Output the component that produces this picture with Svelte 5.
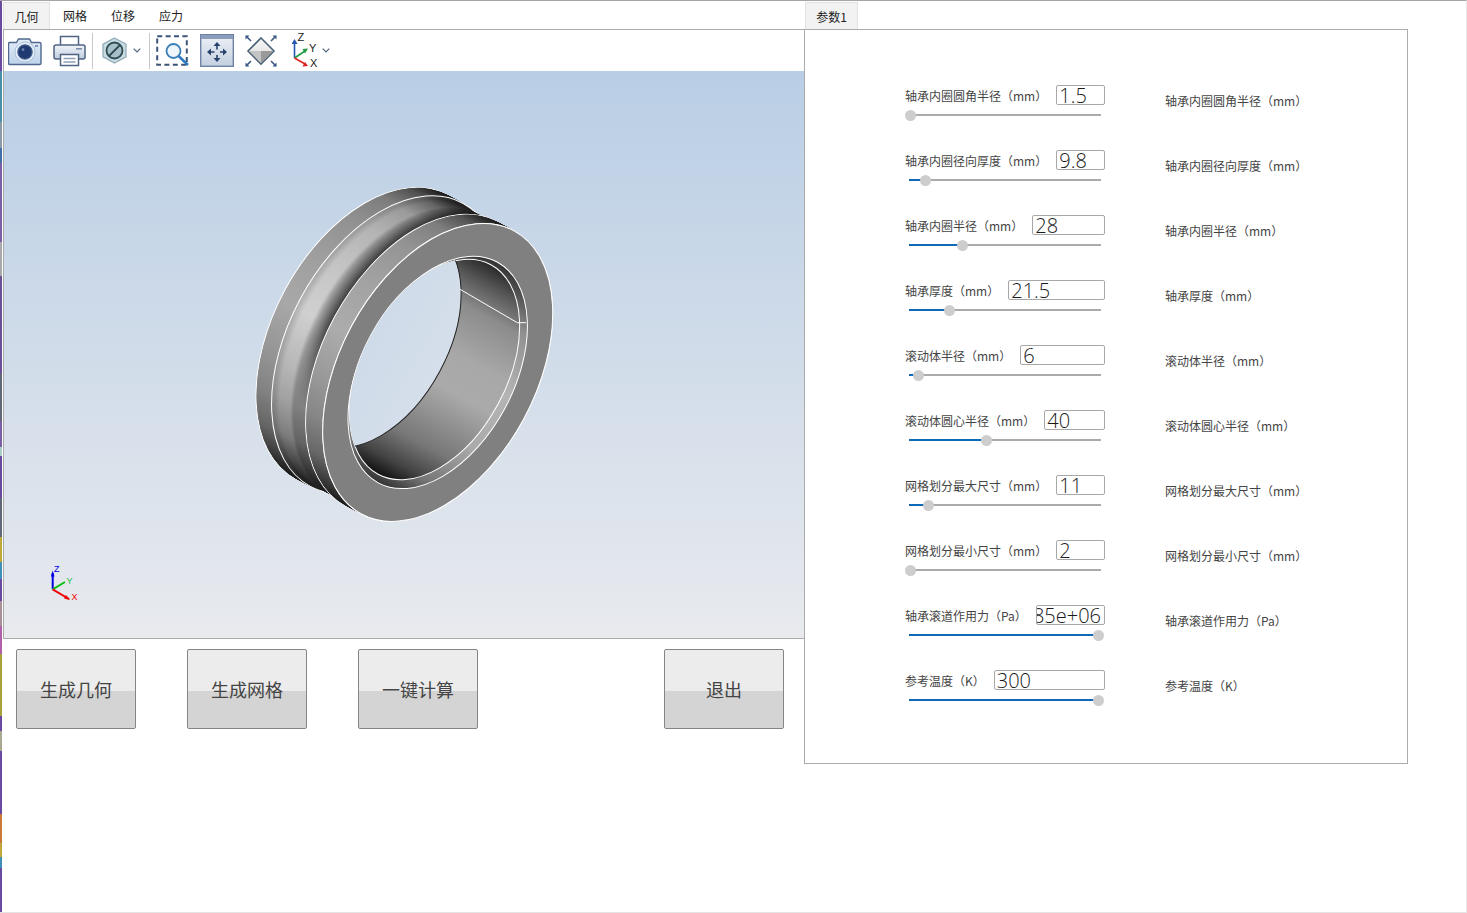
<script>
  const tabs = ["几何", "网格", "位移", "应力"];

  const params = [
    { label: "轴承内圈圆角半径（mm）", value: "1.5", knob: 1 },
    { label: "轴承内圈径向厚度（mm）", value: "9.8", knob: 16 },
    { label: "轴承内圈半径（mm）", value: "28", knob: 53 },
    { label: "轴承厚度（mm）", value: "21.5", knob: 40 },
    { label: "滚动体半径（mm）", value: "6", knob: 9 },
    { label: "滚动体圆心半径（mm）", value: "40", knob: 77 },
    { label: "网格划分最大尺寸（mm）", value: "11", knob: 19 },
    { label: "网格划分最小尺寸（mm）", value: "2", knob: 1 },
    { label: "轴承滚道作用力（Pa）", value: "1.85e+06", knob: 189, clip: true },
    { label: "参考温度（K）", value: "300", knob: 189 },
  ];

  const actions = ["生成几何", "生成网格", "一键计算"];

  // ring geometry, page coordinates
  const cx = 437.7;
  const cy = 372.4;
  const rx = 160.8;
  const ry = 97.8;
  const rot = -61.7;
  const dx = -66.7;
  const dy = -36;

  const edge = [
    [0, 0.15],
    [0.04, 0.35],
    [0.1, 0.6],
    [0.2, 0.78],
    [0.3, 0.88],
    [0.47, 1],
    [0.65, 0.94],
    [0.8, 0.86],
    [0.9, 0.74],
    [0.96, 0.48],
    [1, 0.15],
  ];

  // brightness of the surface at depth t (0 front, 1 back)
  function shade(t) {
    if (t > 0.77) return 168;
    if (t > 0.68) return 178 + ((0.77 - t) / 0.09) * 30;
    if (t > 0.52) return 208;
    if (t > 0.46) return 208 - ((0.52 - t) / 0.06) * 46;
    if (t > 0.26) return 162 - ((0.46 - t) / 0.2) * 110;
    return 172;
  }

  // the groove next to the rim only goes dark on its upper right side
  function grey(t, x, f) {
    let b = shade(t);
    if (t > 0.26 && t < 0.46) {
      const k = Math.min(1, Math.max(0, (0.45 - x) / 0.25));
      b = b + (165 - b) * k;
    }
    return Math.round(b * f);
  }

  function scale(t) {
    if (t > 0.27 && t < 0.76) return 0.985;
    return 1;
  }

  const lines = [0, 0.26, 0.765, 1];
  const slices = [];
  const steps = 90;
  for (let i = 0; i <= steps; i++) {
    const t = 1 - i / steps;
    slices.push({
      id: "s" + i,
      x: cx + dx * t,
      y: cy + dy * t,
      rx: rx * scale(t),
      ry: ry * scale(t),
      stops: edge.map(([o, f]) => {
        const g = grey(t, o, f);
        return { o, c: `rgb(${g},${g},${g})` };
      }),
    });
  }
  const outlines = lines.map((t) => steps - Math.round(t * steps));
  const outlineAt = (i) => outlines.includes(i);

  const boreStops = [
    [0, "#111"],
    [0.08, "#444"],
    [0.2, "#777"],
    [0.45, "#aaa"],
    [0.6, "#a8a8a8"],
    [0.8, "#8c8c8c"],
    [0.92, "#555"],
    [1, "#2a2a2a"],
  ];
  const filletStops = [
    [0, "#333"],
    [0.1, "#777"],
    [0.3, "#aaa"],
    [0.55, "#b4b4b4"],
    [0.8, "#909090"],
    [0.92, "#555"],
    [1, "#333"],
  ];
</script>

<div class="window">
  <div class="strip"></div>

  <div class="left">
    <div class="tabs">
      {#each tabs as tab, i}
        <div class="tab" class:active={i === 0}>{tab}</div>
      {/each}
    </div>

    <div class="toolbar">
      <svg class="camera" width="34" height="30" viewBox="0 0 34 30">
        <defs>
          <linearGradient id="cam" x1="0" y1="0" x2="0" y2="1">
            <stop offset="0" stop-color="#e4edf7" />
            <stop offset="1" stop-color="#bdd2ea" />
          </linearGradient>
        </defs>
        <path d="M1.500 6.500h7l2-3.500h11l2 3.500h8q1.500 0 1.500 1.500v19q0 1.500-1.500 1.500h-30q-1 0-1-1.500v-19q0-1.500 1-1.500z" fill="url(#cam)" stroke="#50688f" stroke-width="1.400" />
        <circle cx="17" cy="16" r="10" fill="#e8f1fa" stroke="#a9c1dc" />
        <circle cx="17" cy="16" r="7.200" fill="#1f3a70" stroke="#47608c" stroke-width="1.200" />
        <circle cx="15" cy="13.600" r="1.400" fill="#6d88b5" />
        <rect x="27" y="9" width="3" height="2" fill="#7f95b8" />
      </svg>

      <svg class="printer" width="34" height="32" viewBox="0 0 34 32">
        <defs>
          <linearGradient id="prn" x1="0" y1="0" x2="0" y2="1">
            <stop offset="0" stop-color="#f2f5f9" />
            <stop offset="1" stop-color="#bccbde" />
          </linearGradient>
        </defs>
        <path d="M7.500 11V1.500h18V11" fill="#fff" stroke="#4f6485" stroke-width="1.500" />
        <rect x="1" y="10" width="31" height="14" rx="2" fill="url(#prn)" stroke="#4f6485" stroke-width="1.500" />
        <rect x="23" y="13" width="6" height="1.600" fill="#7d90ab" />
        <rect x="7.500" y="19.500" width="18" height="11" fill="#fff" stroke="#4f6485" stroke-width="1.500" />
        <path d="M10.500 23.500h12M10.500 27h12" stroke="#8ea0b8" stroke-width="1.400" />
      </svg>

      <div class="sep sep1"></div>

      <svg class="hex" width="25" height="27" viewBox="0 0 25 27">
        <path d="M12.500 1L24 7.200v12.600L12.500 26 1 19.800V7.200z" fill="#c8dce2" stroke="#93adbb" stroke-width="1.300" />
        <circle cx="12.500" cy="13.500" r="8" fill="#a5c0c8" stroke="#2f4a52" stroke-width="1.800" />
        <path d="M7 19L18 8" stroke="#2f4a52" stroke-width="1.800" />
      </svg>

      <svg class="chev chev1" width="8" height="5" viewBox="0 0 8 5">
        <path d="M0.700 0.700L4 4l3.300-3.300" fill="none" stroke="#51667f" stroke-width="1.200" />
      </svg>

      <div class="sep sep2"></div>

      <svg class="zoomfit" width="33" height="31" viewBox="0 0 33 31">
        <rect x="1.200" y="1.200" width="29.600" height="28.600" fill="none" stroke="#3c5478" stroke-width="2" stroke-dasharray="5 3.400" />
        <circle cx="17.500" cy="16" r="7" fill="#eef5fb" stroke="#3b7fb8" stroke-width="1.800" />
        <path d="M22.500 21L32 30" stroke="#2f7cc0" stroke-width="2.600" />
      </svg>

      <svg class="pan" width="34" height="33" viewBox="0 0 34 33">
        <defs>
          <linearGradient id="panbg" x1="0" y1="0" x2="0" y2="1">
            <stop offset="0" stop-color="#eef1f6" />
            <stop offset="1" stop-color="#c3cfe0" />
          </linearGradient>
        </defs>
        <rect x="0.700" y="0.700" width="32.600" height="31.600" fill="url(#panbg)" stroke="#6f82a6" stroke-width="1.400" />
        <rect x="1" y="1" width="32" height="4" fill="#8b9dbc" />
        <path d="M17 12v3.500M17 24v-3M11 18h3.500M23 18h-3" stroke="#27406c" stroke-width="1.600" />
        <path d="M17 8l-3.500 4h7zM17 28l-3.500-4h7zM7 18l4-3.500v7zM27 18l-4-3.500v7z" fill="#27406c" />
      </svg>

      <svg class="diamond" width="32" height="32" viewBox="0 0 32 32">
        <defs>
          <linearGradient id="dtop" x1="0" y1="0" x2="0" y2="1">
            <stop offset="0" stop-color="#f8f8f8" />
            <stop offset="1" stop-color="#d8d8d8" />
          </linearGradient>
        </defs>
        <path d="M16 3L29 16 16 29 3 16z" fill="url(#dtop)" stroke="#4d6276" stroke-width="1.600" />
        <path d="M4 16h12v12z" fill="#c4c4c4" />
        <path d="M28 16H16v12z" fill="#9a9a9a" />
        <path d="M1 1l5 5M31 1l-5 5M1 31l5-5M31 31l-5-5" stroke="#3b5a85" stroke-width="1.600" />
        <path d="M0.500 0.500h4l-4 4zM31.500 0.500h-4l4 4zM0.500 31.500h4l-4-4zM31.500 31.500h-4l4-4z" fill="#3b5a85" />
      </svg>

      <svg class="axes" width="30" height="40" viewBox="0 -2 30 40">
        <path d="M2.500 25V9" stroke="#2557b0" stroke-width="1.600" />
        <path d="M2.500 6l-3 5h6z" fill="#2557b0" />
        <path d="M2.500 25L13 18" stroke="#1f9a45" stroke-width="1.600" />
        <path d="M16 15.500l-5.500 0.500 2.500 4.500z" fill="#1f9a45" />
        <path d="M2.500 25L13 31" stroke="#e02020" stroke-width="1.600" />
        <path d="M16 33l-5.500 0.500 2.500-4.500z" fill="#e02020" />
        <text x="5.500" y="8" class="axis-label">Z</text>
        <text x="17" y="19" class="axis-label">Y</text>
        <text x="18" y="34" class="axis-label">X</text>
      </svg>

      <svg class="chev chev2" width="8" height="5" viewBox="0 0 8 5">
        <path d="M0.700 0.700L4 4l3.300-3.300" fill="none" stroke="#51667f" stroke-width="1.200" />
      </svg>
    </div>

    <div class="viewport">
      <svg width="800" height="567" viewBox="4 71 800 567">
        <defs>
          <linearGradient id="sky" gradientUnits="userSpaceOnUse" x1="0" y1="71" x2="0" y2="638">
            <stop offset="0" stop-color="#b9cee5" />
            <stop offset="1" stop-color="#e8eaee" />
          </linearGradient>
          {#each slices as s}
            <linearGradient id={s.id} x1="0" y1="0" x2="1" y2="0">
              {#each s.stops as st}
                <stop offset={st.o} stop-color={st.c} />
              {/each}
            </linearGradient>
          {/each}
          <linearGradient id="bore" x1="0" y1="0" x2="1" y2="0">
            {#each boreStops as st}
              <stop offset={st[0]} stop-color={st[1]} />
            {/each}
          </linearGradient>
          <linearGradient id="fillet" x1="0" y1="0" x2="1" y2="0">
            {#each filletStops as st}
              <stop offset={st[0]} stop-color={st[1]} />
            {/each}
          </linearGradient>
          <clipPath id="boreclip">
            <ellipse cx="434.500" cy="369.500" rx={rx * 0.74} ry={ry * 0.74} transform="rotate({rot} 434.500 369.500)" />
          </clipPath>
        </defs>

        <rect x="4" y="71" width="800" height="567" fill="url(#sky)" />

        {#each slices as s, i}
          <ellipse
            cx={s.x}
            cy={s.y}
            rx={s.rx}
            ry={s.ry}
            transform="rotate({rot} {s.x} {s.y})"
            fill="url(#{s.id})"
            stroke={outlineAt(i) ? "#fff" : "none"}
            stroke-width="1"
          />
        {/each}

        <!-- front face and bore -->
        <ellipse {cx} {cy} {rx} {ry} transform="rotate({rot} {cx} {cy})" fill="#808080" stroke="#fff" />
        <ellipse {cx} {cy} rx={rx * 0.78} ry={ry * 0.78} transform="rotate({rot} {cx} {cy})" fill="url(#fillet)" stroke="#fff" />
        <ellipse cx="434.500" cy="369.500" rx={rx * 0.74} ry={ry * 0.74} transform="rotate({rot} 434.500 369.500)" fill="url(#bore)" stroke="#fff" />
        <g clip-path="url(#boreclip)">
          <ellipse cx="376" cy="337.300" rx={rx * 0.74} ry={ry * 0.74} transform="rotate({rot} 376 337.300)" fill="url(#sky)" stroke="#222" />
        </g>
        <path d="M460 289.300L517.300 322.700H526" fill="none" stroke="#fff" />

        <!-- triad in the corner -->
        <path d="M52.700 589.300V573" stroke="#0000e0" stroke-width="2" />
        <path d="M52.700 570.500l-1.800 6h3.600z" fill="#0000e0" />
        <path d="M52.700 589.300L65 582" stroke="#10c010" stroke-width="2" />
        <path d="M52.700 589.300L69 599" stroke="#f00000" stroke-width="2" />
        <path d="M70 600l-6-1.500 2-3.500z" fill="#f00000" />
        <text x="54" y="572" class="mini" fill="#0000e0">Z</text>
        <text x="66.500" y="584" class="mini" fill="#20c040">Y</text>
        <text x="71.500" y="600" class="mini" fill="#f00000">X</text>
      </svg>
    </div>

    <div class="actions">
      {#each actions as action}
        <button class="btn">{action}</button>
      {/each}
      <button class="btn quit">退出</button>
    </div>
  </div>

  <div class="right">
    <div class="tabs right-tabs">
      <div class="tab active">参数1</div>
    </div>
    <div class="panel">
      {#each params as p}
        <div class="row">
          <div class="control">
            <div class="line">
              <span class="label">{p.label}</span>
              <div class="field" class:clip={p.clip}><span>{p.value}</span></div>
            </div>
            <div class="slider">
              <div class="fill" style="width: {p.knob}px"></div>
              <div class="knob" style="left: {p.knob}px"></div>
            </div>
          </div>
          <div class="label side">{p.label}</div>
        </div>
      {/each}
    </div>
  </div>
</div>

<style>
  :global(body) {
    background: #fff;
  }

  .window {
    width: 1467px;
    height: 913px;
    box-sizing: border-box;
    display: flex;
    overflow: hidden;
    background: #fff;
    border-top: 1px solid #a4a4a4;
    border-bottom: 1px solid #e4e4e4;
    border-right: 1px solid #e8e8e8;
    font-family: "Noto Sans CJK SC", "Noto Sans", sans-serif;
    color: #333;
  }

  .strip {
    width: 2px;
    flex: none;
    background: linear-gradient(
      to bottom,
      #6a4aa0 0 70px,
      #4a8fa8 70px 121px,
      #8a9aa8 121px 147px,
      #3f6fa8 147px 162px,
      #7a5fa8 162px 241px,
      #a8a8a8 241px 275px,
      #6a5098 275px 373px,
      #606878 373px 420px,
      #7a5fa8 420px 446px,
      #a8d0c8 446px 455px,
      #6a4aa0 455px 497px,
      #606878 497px 536px,
      #c0a838 536px 561px,
      #3f8fb8 561px 578px,
      #6a4aa0 578px 600px,
      #a89098 600px 625px,
      #b05fa8 625px 653px,
      #a8a038 653px 715px,
      #6a4aa0 715px 730px,
      #a8a890 730px 750px,
      #6a4aa0 750px 813px,
      #c87838 813px 842px,
      #c0a838 842px 856px,
      #3f8fb8 856px 867px,
      #6a4aa0 867px 913px
    );
  }

  .left {
    width: 802px;
    flex: none;
    padding-left: 1px;
    box-sizing: border-box;
  }

  .right {
    width: 604px;
    flex: none;
  }

  .tabs {
    height: 29px;
    box-sizing: border-box;
    padding-top: 1px;
    display: flex;
    border-bottom: 1px solid #ababab;
  }

  .right-tabs {
    padding-left: 1px;
    height: 28px;
    border-bottom: none;
  }

  .tab {
    width: 48px;
    text-align: center;
    font-size: 12px;
    line-height: 27px;
    color: #222;
  }

  .tab.active {
    width: 47px;
    margin-right: 1px;
    box-sizing: border-box;
    background: #f2f2f2;
    border: 1px solid #e2e2e2;
    border-bottom: none;
  }

  .right-tabs .tab.active {
    width: 53px;
  }

  .toolbar {
    height: 41px;
    box-sizing: border-box;
    display: flex;
    align-items: center;
    padding-left: 4px;
    border-left: 1px solid #ababab;
  }

  .toolbar svg {
    flex: none;
  }

  .printer {
    margin-left: 11px;
  }

  .sep {
    width: 1px;
    height: 36px;
    flex: none;
    background: #c8c8c8;
  }

  .sep1 {
    margin-left: 5px;
  }

  .hex {
    margin-left: 9px;
  }

  .chev1 {
    margin-left: 6px;
  }

  .sep2 {
    margin-left: 8px;
  }

  .zoomfit {
    margin-left: 6px;
  }

  .pan {
    margin-left: 11px;
  }

  .diamond {
    margin-left: 11px;
  }

  .axes {
    margin-left: 15px;
  }

  .axis-label {
    font-family: "Liberation Sans", sans-serif;
    font-size: 11px;
    fill: #222;
  }

  .mini {
    font-family: "Liberation Sans", sans-serif;
    font-size: 9px;
  }

  .viewport {
    height: 568px;
    box-sizing: border-box;
    border-left: 1px solid #ababab;
    border-bottom: 1px solid #ababab;
  }

  .viewport svg {
    display: block;
  }

  .actions {
    display: flex;
    gap: 51px;
    padding: 10px 20px 0 13px;
  }

  .btn {
    width: 120px;
    height: 80px;
    padding: 0;
    box-sizing: border-box;
    border: 1px solid #858585;
    border-radius: 2px;
    background: linear-gradient(to bottom, #ececec 0 52%, #d4d4d4 52% 100%);
    font-family: inherit;
    font-size: 18px;
    color: #444;
  }

  .quit {
    margin-left: auto;
  }

  .panel {
    height: 735px;
    box-sizing: border-box;
    border: 1px solid #ababab;
    padding: 55px 0 0 100px;
    display: flex;
    flex-direction: column;
    gap: 30px;
  }

  .row {
    height: 35px;
    display: flex;
    align-items: flex-start;
    gap: 60px;
  }

  .control {
    width: 200px;
    height: 35px;
    flex: none;
  }

  .line {
    height: 20px;
    display: flex;
    align-items: center;
    gap: 9px;
  }

  .label {
    font-size: 12px;
    line-height: 20px;
    color: #444;
    white-space: nowrap;
    padding-top: 1px;
  }

  .side {
    margin-top: 5px;
  }

  .field {
    flex: 1;
    min-width: 0;
    height: 20px;
    box-sizing: border-box;
    border: 1px solid #a8a8a8;
    border-radius: 2px;
    padding: 1px 3px 0 2px;
    display: flex;
    align-items: center;
    font-family: "Open Sans", sans-serif;
    font-weight: 300;
    font-size: 20px;
    color: #1a1a1a;
    white-space: nowrap;
  }

  .field span {
    display: block;
    line-height: 18px;
  }

  .field.clip {
    justify-content: flex-end;
    overflow: hidden;
  }

  .slider {
    position: relative;
    width: 192px;
    height: 2px;
    margin: 9px 0 0 4px;
    background: #aaaaaa;
  }

  .fill {
    height: 2px;
    background: #0f68b8;
  }

  .knob {
    position: absolute;
    top: -4px;
    width: 11px;
    height: 11px;
    margin-left: -5.5px;
    border-radius: 50%;
    background: #cdcdcd;
  }
</style>
